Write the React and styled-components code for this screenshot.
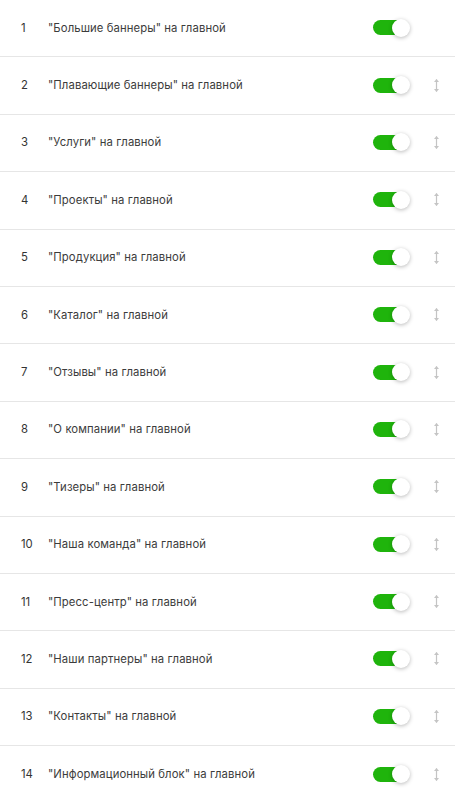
import React, { useState } from "react";
import styled, { createGlobalStyle } from "styled-components";

const GlobalStyle = createGlobalStyle`
  html, body {
    margin: 0;
    padding: 0;
    background: #fff;
  }
  body {
    font-family: Inter, "Noto Sans", "Liberation Sans", sans-serif;
  }
`;

const items = [
  "\"Большие баннеры\" на главной",
  "\"Плавающие баннеры\" на главной",
  "\"Услуги\" на главной",
  "\"Проекты\" на главной",
  "\"Продукция\" на главной",
  "\"Каталог\" на главной",
  "\"Отзывы\" на главной",
  "\"О компании\" на главной",
  "\"Тизеры\" на главной",
  "\"Наша команда\" на главной",
  "\"Пресс-центр\" на главной",
  "\"Наши партнеры\" на главной",
  "\"Контакты\" на главной",
  "\"Информационный блок\" на главной",
];

const List = styled.div`
  display: flex;
  flex-direction: column;
  width: 455px;
`;

const Row = styled.div`
  display: flex;
  align-items: center;
  height: 57.4px;
  box-sizing: border-box;
  border-bottom: ${(p) => (p.$last ? "none" : "1px solid #e6e6e6")};
  padding-bottom: 1px;
`;

const Num = styled.span`
  width: 27px;
  padding-left: 21px;
  font-size: 11.3px;
  color: #333;
`;

const Title = styled.span`
  flex: 1;
  font-size: 11.3px;
  color: #3c3c3c;
  letter-spacing: 0.1px;
`;

const Track = styled.button`
  position: relative;
  width: 36px;
  height: 15px;
  border: none;
  padding: 0;
  border-radius: 8px;
  background: ${(p) => (p.$on ? "#1fb40c" : "#cfcfcf")};
  cursor: pointer;
  margin-right: 23px;
`;

const Knob = styled.span`
  position: absolute;
  top: 50%;
  left: ${(p) => (p.$on ? "19px" : "-1px")};
  width: 18px;
  height: 18px;
  margin-top: -9px;
  border-radius: 50%;
  background: #fff;
  box-shadow: 0 1px 4px rgba(0, 0, 0, 0.28);
`;

const Handle = styled.div`
  width: 8px;
  margin-right: 15px;
  display: flex;
  justify-content: center;
  cursor: grab;
`;

const DragIcon = () => (
  <svg width="7" height="15" viewBox="0 0 7 15">
    <path d="M3.5 1.5 V13.5" stroke="#c4c4c4" strokeWidth="1.2" />
    <path d="M1 4 L3.5 1 L6 4 Z" fill="#c4c4c4" />
    <path d="M1 11 L3.5 14 L6 11 Z" fill="#c4c4c4" />
  </svg>
);

const App = () => {
  const [state, setState] = useState(items.map(() => true));

  return (
    <List>
      <GlobalStyle />
      {items.map((title, i) => (
        <Row key={i} $last={i === items.length - 1}>
          <Num>{i + 1}</Num>
          <Title>{title}</Title>
          <Track
            $on={state[i]}
            onClick={() =>
              setState(state.map((v, j) => (j === i ? !v : v)))
            }
          >
            <Knob $on={state[i]} />
          </Track>
          <Handle>{i > 0 && <DragIcon />}</Handle>
        </Row>
      ))}
    </List>
  );
};

export default App;
